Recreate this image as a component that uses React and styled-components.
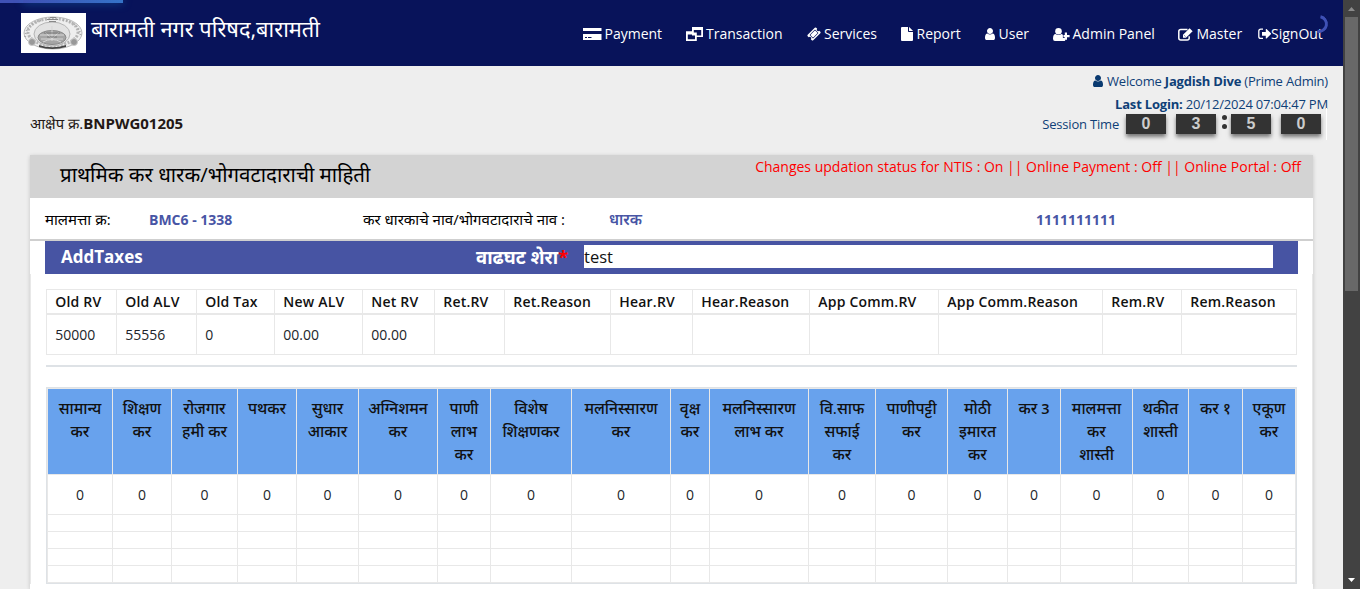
import React from "react";
import styled, { createGlobalStyle, css } from "styled-components";

const GlobalStyle = createGlobalStyle`
  * { box-sizing: border-box; }
  body {
    margin: 0;
    overflow: hidden;
    background: #eee;
    font-family: "Open Sans", "Noto Sans Devanagari", "Noto Sans", sans-serif;
    font-size: 14px;
    color: #212529;
  }
`;

const Window = styled.div`
  display: flex;
  width: 1360px;
  height: 589px;
  overflow: hidden;
`;

const Page = styled.div`
  position: relative;
  width: 1343px;
  height: 589px;
  overflow: hidden;
  background: #eee;
`;

const ProgressBar = styled.div`
  position: absolute;
  top: 0;
  left: 0;
  width: 123px;
  height: 3px;
  background: #3f51b5;
  overflow: visible;
  &::after {
    content: "";
    display: block;
    margin-left: auto;
    width: 100px;
    height: 3px;
    background: linear-gradient(90deg, #3f51b5, #3573c8);
    box-shadow: 0 0 8px rgba(34, 153, 221, 0.6);
  }
`;

const Spinner = styled.div`
  position: absolute;
  top: 15px;
  right: 15px;
  width: 18px;
  height: 18px;
  border: 3px solid transparent;
  border-top-color: #3f51b5;
  border-left-color: #3f51b5;
  border-radius: 50%;
  transform: rotate(147deg);
`;

const Header = styled.header`
  display: flex;
  height: 66px;
  padding-left: 21px;
  background: #08135a;
  color: #fff;
`;

const Logo = styled.svg`
  flex: none;
  margin-top: 13px;
  width: 65px;
  height: 40px;
  background: #fff;
`;

const SiteTitle = styled.h1`
  margin: 14px 0 0 5px;
  width: 492px;
  font-size: 21.8px;
  font-weight: 400;
  line-height: 30px;
  white-space: nowrap;
`;

const Nav = styled.nav`
  display: flex;
  margin-top: 24px;
  height: 20px;
`;

const NavItem = styled.a`
  display: flex;
  flex: none;
  align-items: center;
  width: ${(p) => p.$w}px;
  line-height: 20px;
  white-space: nowrap;
`;

const IconSlot = styled.span`
  display: flex;
  flex: none;
  align-items: center;
  width: ${(p) => p.$w}px;
  height: 20px;
`;

const Info = styled.section`
  display: flex;
  justify-content: space-between;
  height: 89px;
  padding: 0 15px 0 30px;
`;

const Reference = styled.div`
  margin-top: 47px;
  line-height: 20px;
  white-space: nowrap;
  color: #231815;
  font-size: 14.8px;
  b {
    font-size: 15px;
  }
`;

const Account = styled.div`
  display: flex;
  flex-direction: column;
  align-items: flex-end;
  color: #0f4077;
  font-size: 13px;
  letter-spacing: -0.2px;
  white-space: nowrap;
`;

const AccountLine = styled.div`
  display: flex;
  align-items: center;
  gap: 4px;
  height: 20px;
  margin-top: ${(p) => p.$top}px;
`;

const Session = styled.div`
  display: flex;
  align-items: center;
  height: 32px;
  margin-right: 1px;
  padding-right: 5px;
  border-right: 1px solid #fff;
  margin-top: -6px;
`;

const Tile = styled.span`
  width: 40px;
  height: 20px;
  margin-left: ${(p) => p.$gap}px;
  background: #333;
  color: #ccc;
  box-shadow: 0 3px 4px rgba(0, 0, 0, 0.5);
  font: bold 16px/20px "Liberation Sans", sans-serif;
  letter-spacing: 0;
  text-align: center;
`;

const Dots = styled.span`
  display: flex;
  flex-direction: column;
  gap: 4px;
  margin: -5px 0 0 6px;
  &::before,
  &::after {
    content: "";
    width: 5px;
    height: 5px;
    border-radius: 50%;
    background: #333;
  }
`;

const Panel = styled.main`
  margin: 0 30px;
  height: 434px;
  background: #fff;
  box-shadow: 0 1px 4px rgba(0, 0, 0, 0.18);
`;

const PanelTitle = styled.div`
  display: flex;
  justify-content: space-between;
  height: 43px;
  padding: 0 12px 0 30px;
  background: #d3d3d3;
`;

const Heading = styled.h2`
  margin: 4px 0 0;
  font-size: 20.5px;
  font-weight: 400;
  line-height: 30px;
  color: #000;
  white-space: nowrap;
`;

const Notice = styled.div`
  line-height: 24px;
  color: #f00;
  white-space: nowrap;
`;

const Details = styled.div`
  display: flex;
  align-items: center;
  height: 43px;
  padding: 2px 0 0 15px;
  border-bottom: 2px solid #cfcfcf;
  white-space: nowrap;
`;

const Field = styled.span`
  width: ${(p) => p.$w}px;
  color: #000;
  font-size: 15px;
  ${(p) => p.$value && css`
    color: #4855a5;
    font-size: ${p.$size || 14}px;
    font-weight: ${p.$size ? 600 : 700};
  `}
`;

const TaxBar = styled.div`
  display: flex;
  height: 33px;
  margin: 0 15px;
  padding-left: 16px;
  background: #4754a3;
  color: #fff;
  font-size: 17px;
  font-weight: 700;
  line-height: 32px;
  white-space: nowrap;
`;

const BarLabel = styled.span`
  width: ${(p) => p.$w}px;
  font-size: ${(p) => p.$size}px;
`;

const Required = styled.span`
  color: #f00;
`;

const Remark = styled.div`
  width: 689px;
  height: 23px;
  margin-top: 4px;
  background: #fff;
  color: #111;
  font-size: 16.5px;
  font-weight: 400;
  line-height: 24px;
`;

const Body = styled.div`
  padding: 15px 15px 0;
  border: solid #e8e8e8;
  border-width: 0 1px;
`;

const Grid = styled.div`
  display: grid;
  grid-template-columns: ${(p) => p.$cols};
`;

const Summary = styled(Grid)`
  border: solid #e8e8e8;
  border-width: 1px 0 1px 1px;
`;

const SummaryCell = styled.div`
  height: ${(p) => (p.$head ? 25 : 39)}px;
  padding-left: 8.3px;
  border-right: 1px solid #e8e8e8;
  line-height: ${(p) => (p.$head ? 24 : 40)}px;
  white-space: nowrap;
  ${(p) => p.$head && css`
    border-bottom: 2px solid #e8e8e8;
    font-weight: 600;
    letter-spacing: 0.2px;
    color: #111;
  `}
`;

const Rule = styled.div`
  height: 2px;
  margin: 10px 0 20px;
  background: #dee2e6;
`;

const TaxTable = styled.div`
  border: 1px solid #dee2e6;
`;

const TaxInner = styled(Grid)`
  border: solid #e8e8e8;
  border-width: 1px 0 0 1px;
`;

const TaxHead = styled.div`
  height: 86px;
  padding-top: 8px;
  background: #68a2ed;
  border: solid #e8e8e8;
  border-width: 0 1px 1px 0;
  color: #111;
  font-size: 15.6px;
  font-weight: 500;
  line-height: 23px;
  text-align: center;
  white-space: pre;
  b {
    font-size: 14.5px;
    font-weight: 600;
  }
`;

const TaxCell = styled.div`
  height: ${(p) => (p.$tall ? 40 : 17)}px;
  border: solid #e8e8e8;
  border-width: 0 1px 1px 0;
  line-height: 40px;
  text-align: center;
`;

const Scrollbar = styled.div`
  display: flex;
  flex-direction: column;
  align-items: center;
  width: 17px;
  height: 589px;
  background: #424242;
`;

const Thumb = styled.div`
  width: 13px;
  height: 274px;
  margin-bottom: auto;
  background: #686868;
`;

const Arrow = styled.svg`
  width: 17px;
  height: 17px;
`;

const CardIcon = () => (
  <svg width="19" height="12" viewBox="0 0 19 12" fill="#fff">
    <path d="M0 0h18.500v3H0zM0 6h18.500v6H0z" />
    <path d="M2 9.500h2M5 9.500h3.500" stroke="#08135a" />
  </svg>
);
const WindowsIcon = () => (
  <svg width="17" height="14" viewBox="0 0 17 14" fill="#fff" fillRule="evenodd">
    <path d="M6 0h11v10h-6.200V8.500h4.400V3H7.800v2.500h3V14H0V4.200h6zM1.800 7.500v4.800H9V8.500H6v-1z" />
  </svg>
);
const TicketIcon = () => (
  <svg width="14" height="14" viewBox="0 0 1792 1792" fill="#fff">
    <path d="M1024 452l316 316-572 572-316-316z" opacity=".75" />
    <path d="M1024 452l316 316-572 572-316-316zM813 1430l618-618q19-19 19-45t-19-45l-362-362q-18-18-45-18t-45 18l-618 618q-19 19-19 45t19 45l362 362q18 18 45 18t45-18zm889-637l-907 908q-37 37-90.500 37t-90.500-37l-126-126q56-56 56-136t-56-136-136-56-136 56l-125-126q-37-37-37-90.500t37-90.500l907-906q37-37 90.500-37t90.500 37l125 125q-56 56-56 136t56 136 136 56 136-56l126 125q37 37 37 90.500t-37 90.500z" />
  </svg>
);
const FileIcon = () => (
  <svg width="12" height="14" viewBox="0 0 12 14" fill="#fff">
    <path d="M1 0h6v4.200q0 .8.800.8H12v8q0 1-1 1H1q-1 0-1-1V1q0-1 1-1zM8 .1q.4.100.6.300l3 3q.3.300.4.600H8z" />
  </svg>
);
const UserIcon = ({ color = "#fff" }) => (
  <svg width="10" height="12" viewBox="0 0 1280 1536" fill={color}>
    <path d="M1280 1271q0 109-62.500 187t-150.500 78H213q-88 0-150.500-78T0 1271q0-85 8.500-160.500t31.500-152 58.500-131 94-89T327 704q131 128 313 128t313-128q76 0 134.500 34.500t94 89 58.500 131 31.500 152 8.500 160.500zm-256-887q0 159-112.500 271.500T640 768 368.500 655.500 256 384t112.500-271.500T640 0t271.500 112.500T1024 384z" />
  </svg>
);
const UserPlusIcon = () => (
  <svg width="17" height="13" viewBox="0 0 17 13" fill="#fff">
    <circle cx="5.500" cy="3.300" r="3.300" />
    <path d="M2.600 6q1.200 1.100 2.900 1.100T8.400 6q1 .1 1.500.9v3h2.300v2.600q-.4.500-1.300.500H2Q0 13 0 10.700 0 6.200 2.600 6zM11.800 4.500h2.200v2.600h2.600v2.100H14v2.600h-2.200V9.200H10.500V7.100h1.300z" />
  </svg>
);
const EditIcon = () => (
  <svg width="15" height="13" viewBox="0 0 15 13" fill="none" stroke="#fff">
    <path d="M9.500 1.600H2.800q-2 0-2 2v6.300q0 2 2 2h6.400q2 0 2-2V8.300" strokeWidth="1.500" />
    <path d="M5 9.700V6.800L11.600.2l3 3L8 9.700z" fill="#fff" stroke="none" />
    <path d="M6.200 7.300l1.300 1.300" stroke="#08135a" strokeWidth=".6" />
  </svg>
);
const SignOutIcon = () => (
  <svg width="13" height="12" viewBox="0 0 13 12" fill="#fff">
    <path d="M5 1.200H2.800q-2 0-2 2v5.200q0 2 2 2H5" fill="none" stroke="#fff" strokeWidth="1.300" />
    <path d="M4 3.900h3.800V1.200q.2-.5.700-.2l4.400 4.300q.3.500 0 1L8.500 10.500q-.5.300-.7-.2V7.700H4z" />
  </svg>
);

const navItems = [
  { label: "Payment", Icon: CardIcon, w: 103, slot: 21.5 },
  { label: "Transaction", Icon: WindowsIcon, w: 121, slot: 20 },
  { label: "Services", Icon: TicketIcon, w: 94, slot: 17 },
  { label: "Report", Icon: FileIcon, w: 84, slot: 15.5 },
  { label: "User", Icon: UserIcon, w: 68, slot: 13.5 },
  { label: "Admin Panel", Icon: UserPlusIcon, w: 125, slot: 19.5 },
  { label: "Master", Icon: EditIcon, w: 80, slot: 18.5 },
  { label: "SignOut", Icon: SignOutIcon, w: 66, slot: 13 },
];

const summary = [
  ["Old RV", "50000", 70],
  ["Old ALV", "55556", 80],
  ["Old Tax", "0", 78],
  ["New ALV", "00.00", 88],
  ["Net RV", "00.00", 72],
  ["Ret.RV", "", 70],
  ["Ret.Reason", "", 106],
  ["Hear.RV", "", 82],
  ["Hear.Reason", "", 117],
  ["App Comm.RV", "", 129],
  ["App Comm.Reason", "", 164],
  ["Rem.RV", "", 79],
  ["Rem.Reason", "", 115],
];

const taxes = [
  ["सामान्य\nकर", 65],
  ["शिक्षण\nकर", 59],
  ["रोजगार\nहमी कर", 66],
  ["पथकर", 59],
  ["सुधार\nआकार", 62],
  ["अग्निशमन\nकर", 79],
  ["पाणी\nलाभ\nकर", 53],
  ["विशेष\nशिक्षणकर", 81],
  ["मलनिस्सारण\nकर", 99],
  ["वृक्ष\nकर", 39],
  ["मलनिस्सारण\nलाभ कर", 99],
  ["वि.साफ\nसफाई\nकर", 67],
  ["पाणीपट्टी\nकर", 72],
  ["मोठी\nइमारत\nकर", 60],
  [<>कर <b>3</b></>, 53],
  ["मालमत्ता\nकर\nशास्ती", 72],
  ["थकीत\nशास्ती", 56],
  ["कर १", 54],
  ["एकूण\nकर", 53],
];

const Emblem = () => (
  <Logo viewBox="0 0 65 40" fill="none" stroke="#999">
    <ellipse cx="32" cy="20" rx="29" ry="16" fill="#eee" stroke="#bbb" />
    <ellipse cx="32" cy="19" rx="25" ry="13.500" stroke="#b5b5b5" strokeWidth="3" strokeDasharray="2 1.500" />
    <ellipse cx="31" cy="21" rx="18" ry="12" fill="#e2e2e2" stroke="#b5b5b5" />
    <ellipse cx="31" cy="24.500" rx="14" ry="7" fill="#a5a5a5" stroke="#888" />
    <path d="M19 22h24M20 26h22M31 13v15M24 19l7 7 7-7M22 29q9-5 18 0" stroke="#d5d5d5" />
    <path d="M23 20h16M26 24h10" stroke="#777" />
    <path d="M18 32q13 4.500 27 0v2q-14 4-27 0z" fill="#444" stroke="none" />
    <circle cx="11" cy="29" r="3.500" fill="#999" stroke="#ccc" />
    <circle cx="53" cy="29" r="3.500" fill="#999" stroke="#ccc" />
    <path d="M26 6.500h11M28 8.500h7M29 4.500h6" stroke="#888" />
    <path d="M4 24Q6 9 22 7M42 7q16 2 18 17" stroke="#aaa" strokeDasharray="1 2" strokeWidth="2" />
  </Logo>
);

export default function App() {
  const summaryCols = summary.map((c) => c[2] + "px").join(" ");
  const taxCols = taxes.map((c) => c[1] + "px").join(" ");
  return (
    <Window>
      <GlobalStyle />
      <Page>
        <Header>
          <Emblem />
          <SiteTitle>बारामती नगर परिषद,बारामती</SiteTitle>
          <Nav>
            {navItems.map(({ label, Icon, w, slot }) => (
              <NavItem key={label} $w={w}>
                <IconSlot $w={slot}><Icon /></IconSlot>
                {label}
              </NavItem>
            ))}
          </Nav>
        </Header>
        <ProgressBar />
        <Spinner />
        <Info>
          <Reference>आक्षेप क्र.<b>BNPWG01205</b></Reference>
          <Account>
            <AccountLine $top={5}>
              <UserIcon color="#0a3a70" />
              <span>Welcome <b>Jagdish Dive</b> (Prime Admin)</span>
            </AccountLine>
            <AccountLine $top={3}>
              <span><b>Last Login:</b> 20/12/2024 07:04:47 PM</span>
            </AccountLine>
            <Session>
              Session Time
              <Tile $gap={7}>0</Tile>
              <Tile $gap={10}>3</Tile>
              <Dots />
              <Tile $gap={4}>5</Tile>
              <Tile $gap={10}>0</Tile>
            </Session>
          </Account>
        </Info>
        <Panel>
          <PanelTitle>
            <Heading>प्राथमिक कर धारक/भोगवटादाराची माहिती</Heading>
            <Notice>Changes updation status for NTIS : On || Online Payment : Off || Online Portal : Off</Notice>
          </PanelTitle>
          <Details>
            <Field $w={104}>मालमत्ता क्र:</Field>
            <Field $w={214} $value>BMC6 - 1338</Field>
            <Field $w={246}>कर धारकाचे नाव/भोगवटादाराचे नाव :</Field>
            <Field $w={427} $value $size={15.2}>धारक</Field>
            <Field $w={100} $value>1111111111</Field>
          </Details>
          <TaxBar>
            <BarLabel $w={415} $size={17}>AddTaxes</BarLabel>
            <BarLabel $w={108} $size={18.5}>वाढघट शेरा<Required>*</Required></BarLabel>
            <Remark>test</Remark>
          </TaxBar>
          <Body>
            <Summary $cols={summaryCols}>
              {summary.map(([h]) => <SummaryCell key={h} $head>{h}</SummaryCell>)}
              {summary.map(([h, v]) => <SummaryCell key={h}>{v}</SummaryCell>)}
            </Summary>
            <Rule />
            <TaxTable>
              <TaxInner $cols={taxCols}>
                {taxes.map(([h], i) => <TaxHead key={i}>{h}</TaxHead>)}
                {taxes.map((_, i) => <TaxCell key={i} $tall>0</TaxCell>)}
                {[0, 1, 2, 3].map((r) => taxes.map((_, i) => <TaxCell key={r + "-" + i} />))}
              </TaxInner>
            </TaxTable>
          </Body>
        </Panel>
      </Page>
      <Scrollbar>
        <Arrow viewBox="0 0 17 17"><path d="M5 11h7L8.500 7z" fill="#8b8b8b" /></Arrow>
        <Thumb />
        <Arrow viewBox="0 0 17 17"><path d="M5 6h7L8.500 10z" fill="#fff" /></Arrow>
      </Scrollbar>
    </Window>
  );
}
